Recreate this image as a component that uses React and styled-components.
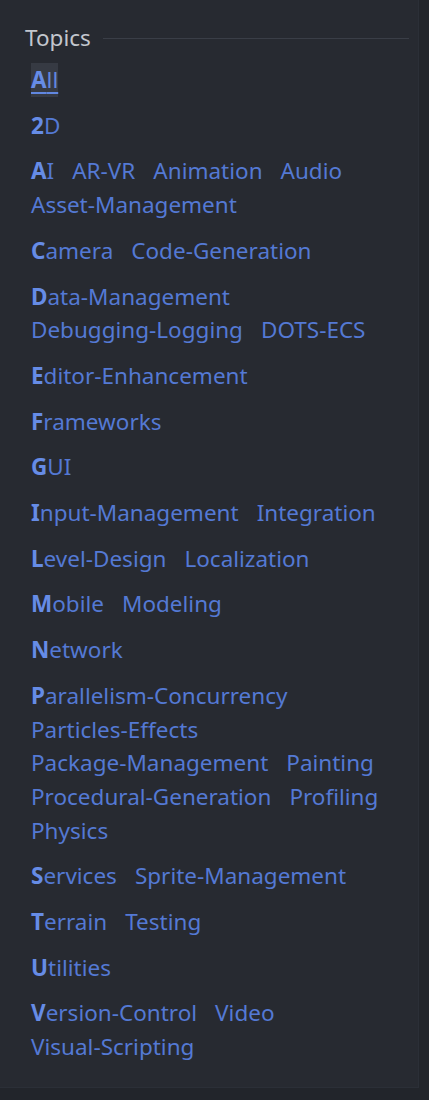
import React from 'react'
import styled, { createGlobalStyle } from 'styled-components'

const Global = createGlobalStyle`
  html, body {
    margin: 0;
    padding: 0;
    background: #22252b;
  }
  body {
    font-family: "Noto Sans", "Open Sans", sans-serif;
  }
`

const Panel = styled.div`
  width: 419px;
  height: 1088px;
  box-sizing: border-box;
  background: #272a31;
  border-right: 1px solid #2b2f37;
  border-bottom: 1px solid #2b2f37;
  padding: 23px 9px 0 25px;
`

const Heading = styled.div`
  display: flex;
  align-items: center;
  gap: 12px;
  color: #c3c7ce;
  font-size: 22.5px;
  line-height: 30px;
  margin-bottom: 10px;

  &::after {
    content: '';
    flex: 1;
    height: 1px;
    background: #3a3e47;
  }
`

const Groups = styled.div`
  display: flex;
  flex-direction: column;
  gap: 12px;
  padding-left: 6px;
`

const Group = styled.div`
  display: flex;
  flex-wrap: wrap;
  column-gap: 18px;
  font-size: 22.5px;
  line-height: 33.7px;
`

const Link = styled.a`
  color: #5479d4;
  text-decoration: none;
  white-space: nowrap;
  cursor: pointer;

  ${p => p.$active && `
    background: #363a43;
    text-decoration: underline;
    text-underline-offset: 4px;
    text-decoration-thickness: 2px;
    color: #6187e0;
  `}
`

const Initial = styled.b`
  color: #668ce6;
  font-weight: 700;
`

const groups = [
  ['All'],
  ['2D'],
  ['AI', 'AR-VR', 'Animation', 'Audio', 'Asset-Management'],
  ['Camera', 'Code-Generation'],
  ['Data-Management', 'Debugging-Logging', 'DOTS-ECS'],
  ['Editor-Enhancement'],
  ['Frameworks'],
  ['GUI'],
  ['Input-Management', 'Integration'],
  ['Level-Design', 'Localization'],
  ['Mobile', 'Modeling'],
  ['Network'],
  ['Parallelism-Concurrency', 'Particles-Effects', 'Package-Management', 'Painting', 'Procedural-Generation', 'Profiling', 'Physics'],
  ['Services', 'Sprite-Management'],
  ['Terrain', 'Testing'],
  ['Utilities'],
  ['Version-Control', 'Video', 'Visual-Scripting'],
]

export default function App() {
  return (
    <>
      <Global />
      <Panel>
        <Heading>Topics</Heading>
        <Groups>
          {groups.map((items, gi) => (
            <Group key={gi}>
              {items.map((name, i) => (
                <Link key={name} $active={gi === 0}>
                  {i === 0 ? (
                    <>
                      <Initial>{name[0]}</Initial>
                      {name.slice(1)}
                    </>
                  ) : name}
                </Link>
              ))}
            </Group>
          ))}
        </Groups>
      </Panel>
    </>
  )
}
